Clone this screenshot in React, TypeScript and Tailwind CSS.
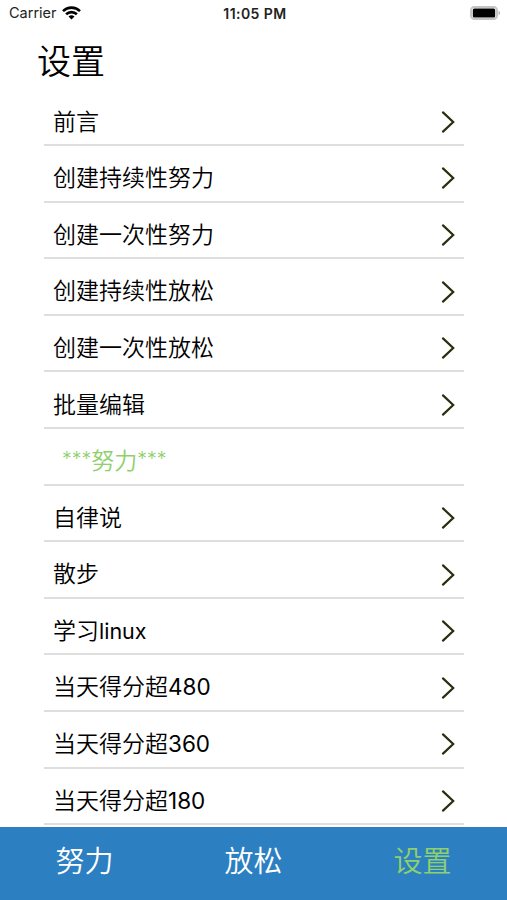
import { clsx } from "clsx";

type Row = { label: string; suffix?: string };

const ROWS: Row[] = [
  { label: "前言" },
  { label: "创建持续性努力" },
  { label: "创建一次性努力" },
  { label: "创建持续性放松" },
  { label: "创建一次性放松" },
  { label: "批量编辑" },
];

const EFFORT_ROWS: Row[] = [
  { label: "自律说" },
  { label: "散步" },
  { label: "学习", suffix: "linux" },
  { label: "当天得分超", suffix: "480" },
  { label: "当天得分超", suffix: "360" },
  { label: "当天得分超", suffix: "180" },
];

const TABS = [
  { label: "努力", active: false },
  { label: "放松", active: false },
  { label: "设置", active: true },
];

const ROW_CLASS =
  "flex h-[56.6px] items-center border-b-2 border-[#dedede] pr-[9px] pt-[10px] text-[23px] font-[350]";

function WifiIcon() {
  return (
    <svg className="-mt-[2px] h-[14px] w-[19px]" viewBox="0 0 19 14" fill="none" stroke="#000" strokeWidth="2.6">
      <path d="M1 5.1a12.2 12.2 0 0 1 17 0" />
      <path d="M4.1 8.3a7.7 7.7 0 0 1 10.8 0" />
      <path d="M9.5 13.6 6.5 10.6a4.3 4.3 0 0 1 6 0Z" fill="#000" stroke="none" />
    </svg>
  );
}

function BatteryIcon() {
  return (
    <svg className="-mt-[1px] h-[14px] w-[31px]" viewBox="0 0 31 14" fill="none">
      <rect x="1" y="1" width="26" height="12" rx="3.4" stroke="#c4c4c4" strokeWidth="2" />
      <rect x="2.8" y="2.5" width="22.4" height="9" rx="1.6" fill="#000" />
      <path d="M28.6 4.8c2 .7 2 3.7 0 4.4Z" fill="#b5b5b5" />
    </svg>
  );
}

function StatusBar() {
  return (
    <header className="grid h-[27px] grid-cols-3 items-center pl-[9px] pr-[6px] text-[14.5px] leading-none text-[#222]">
      <div className="flex items-center gap-[5px]">
        Carrier
        <WifiIcon />
      </div>
      <span className="text-center text-[14px] font-semibold tracking-[0.45px]">11:05 PM</span>
      <div className="flex justify-end">
        <BatteryIcon />
      </div>
    </header>
  );
}

function Chevron() {
  return (
    <svg className="h-[22px] w-[14px]" viewBox="0 0 14 22" fill="none" stroke="#26300f" strokeWidth="2.2" strokeLinecap="round">
      <path d="M2 1.4 12.2 11 2 20.6" />
    </svg>
  );
}

function SettingRow({ label, suffix }: Row) {
  return (
    <li className={clsx(ROW_CLASS, "justify-between pl-[9px] text-black")}>
      <span>
        {label}
        {suffix && (
          <span className={clsx("font-normal", suffix === "linux" ? "text-[21.5px]" : "text-[22.5px]")}>{suffix}</span>
        )}
      </span>
      <Chevron />
    </li>
  );
}

export default function App() {
  return (
    <div className="flex h-[900px] w-[507px] flex-col overflow-hidden bg-white font-['Inter','Noto_Sans_CJK_SC',sans-serif]">
      <StatusBar />
      <h1 className="h-[62.5px] pl-[37px] text-[34px] font-[350] leading-[70px] text-black">设置</h1>
      <ul className="ml-[44px] mr-[43px] min-h-0 flex-1 overflow-hidden">
        {ROWS.map((row) => (
          <SettingRow key={row.label} {...row} />
        ))}
        <li className={clsx(ROW_CLASS, "pl-[18px] text-[#8ed06c]")}>
          <span className="pb-[3px] text-[19.5px]">***</span>
          努力
          <span className="pb-[3px] text-[19.5px]">***</span>
        </li>
        {EFFORT_ROWS.map((row) => (
          <SettingRow key={row.label + (row.suffix ?? "")} {...row} />
        ))}
      </ul>
      <nav className="grid h-[73px] shrink-0 grid-cols-3 bg-[#2c80c2] text-center text-[29px] font-[350] leading-[70px]">
        {TABS.map(({ label, active }) => (
          <button key={label} type="button" className={clsx("h-[70px]", active ? "text-[#8ed06c]" : "text-white")}>
            {label}
          </button>
        ))}
      </nav>
    </div>
  );
}
